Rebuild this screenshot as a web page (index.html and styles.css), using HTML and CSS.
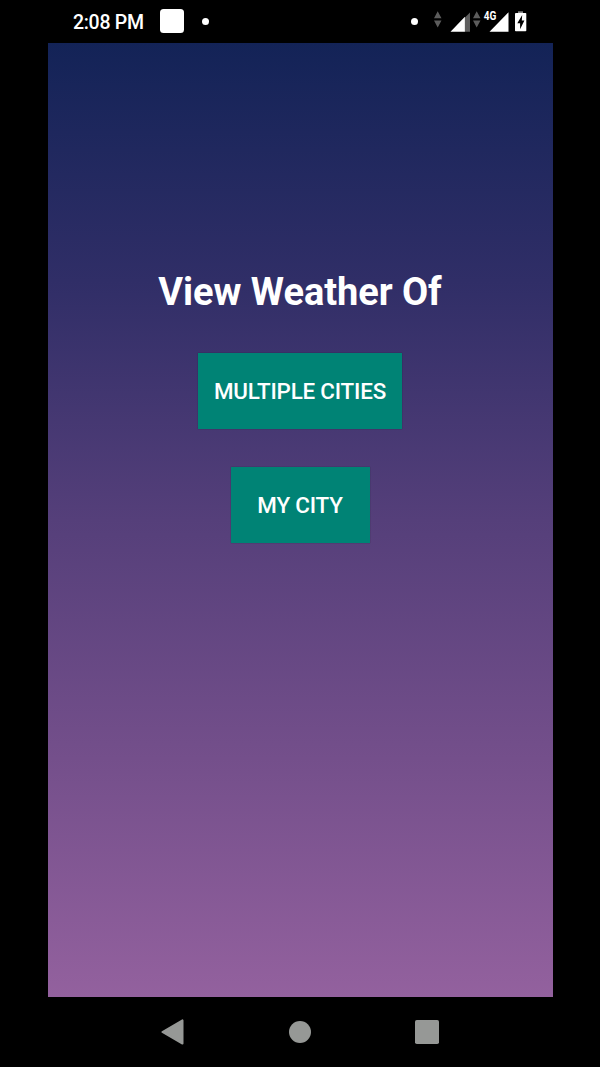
FILE: index.html
```html
<!DOCTYPE html>
<html lang="en">
<head>
<meta charset="utf-8">
<title>Weather</title>
<link rel="stylesheet" href="styles.css">
</head>
<body>
<div class="phone">
  <header class="status">
    <span class="time">2:08 PM</span>
    <span class="notification"></span>
    <span class="dot"></span>
    <span class="dot dot-right"></span>
    <svg class="indicators" width="94" height="26" viewBox="433 8 94 26">
      <path fill="#5c5c5c" d="M434 18.3L437.7 11.3L441.5 18.3ZM434 20.5H441.5L437.7 27.5ZM473 18.3L476.7 11.3L480.5 18.3ZM473 20.5H480.5L476.7 27.5Z"/>
      <path fill="#5f5f5f" d="M464.7 17.7L470 12.4V31.7H464.7Z"/>
      <path fill="#fff" d="M450.5 31.7L464.9 16.7V31.7ZM489.5 31.7L508.5 12.2V31.7Z"/>
      <path fill="#8a8a8a" d="M518 11.3H523V14H518Z"/>
      <rect x="515" y="13" width="11.3" height="18.2" rx=".8" fill="#fff"/>
      <path fill="#000" d="M522.2 15L517.3 23.2H520.1V29.3L524.4 20.5H521.8Z"/>
      <text class="network" x="483.8" y="20" textLength="12.6" lengthAdjust="spacingAndGlyphs">4G</text>
    </svg>
  </header>
  <main class="screen">
    <h1 class="title">View Weather Of</h1>
    <button class="choice choice-multiple">MULTIPLE CITIES</button>
    <button class="choice choice-single">MY CITY</button>
  </main>
  <nav class="navbar">
    <svg width="24" height="26" viewBox="0 0 24 26"><path fill="#969896" stroke="#969896" stroke-width="2" stroke-linejoin="round" d="M1.4 13L21.5 1.4V24.6Z"/></svg>
    <svg width="22" height="22" viewBox="0 0 22 22"><circle cx="11" cy="11" r="11" fill="#969896"/></svg>
    <svg width="24" height="24" viewBox="0 0 24 24"><rect width="24" height="24" rx="1.8" fill="#969896"/></svg>
  </nav>
</div>
</body>
</html>
```
FILE: styles.css
```css
* {
  box-sizing: border-box;
}

body {
  margin: 0;
  background: #000;
  color: #fff;
  font-family: Roboto, "Liberation Sans", sans-serif;
}

.phone {
  display: flex;
  flex-direction: column;
  width: 505px;
  height: 1067px;
  margin: 0 47px 0 48px;
}

.status {
  display: flex;
  align-items: center;
  height: 43px;
  padding: 0 26px 1px 25px;
}

.time {
  width: 87px;
  padding-top: 4px;
  font-size: 19.5px;
  font-weight: 500;
  letter-spacing: -0.3px;
  line-height: 24px;
  white-space: nowrap;
}

.notification {
  width: 24px;
  height: 24px;
  border-radius: 3.5px;
  background: #fff;
}

.dot {
  width: 7px;
  height: 7px;
  margin-left: 18px;
  border-radius: 50%;
  background: #fff;
}

.dot-right {
  margin-left: auto;
}

.indicators {
  margin-left: 15.5px;
}

.network {
  fill: #fff;
  font-size: 12px;
  font-weight: 700;
}

.screen {
  display: flex;
  flex-direction: column;
  align-items: center;
  height: 954px;
  padding: 227px 1px 0 0;
  background: linear-gradient(#132357 0%, #302e67 25%, #553f7a 50%, #744f8b 75%, #93619e 100%);
}

.title {
  margin: 0 0 38px;
  font-size: 38px;
  font-weight: 700;
  letter-spacing: -0.05px;
  line-height: 45px;
  white-space: nowrap;
}

.choice {
  height: 76px;
  padding: 0 0 1px;
  border: 0;
  background: #008375;
  box-shadow: 0 0 1px #0006;
  color: #fff;
  font: 500 22.4px Roboto, "Liberation Sans", sans-serif;
  letter-spacing: -0.2px;
  white-space: nowrap;
}

.choice-multiple {
  width: 204px;
  margin-bottom: 38px;
}

.choice-single {
  width: 139px;
}

.navbar {
  display: flex;
  align-items: center;
  justify-content: space-between;
  height: 70px;
  padding: 0 114.4px 0 112.8px;
}
```
